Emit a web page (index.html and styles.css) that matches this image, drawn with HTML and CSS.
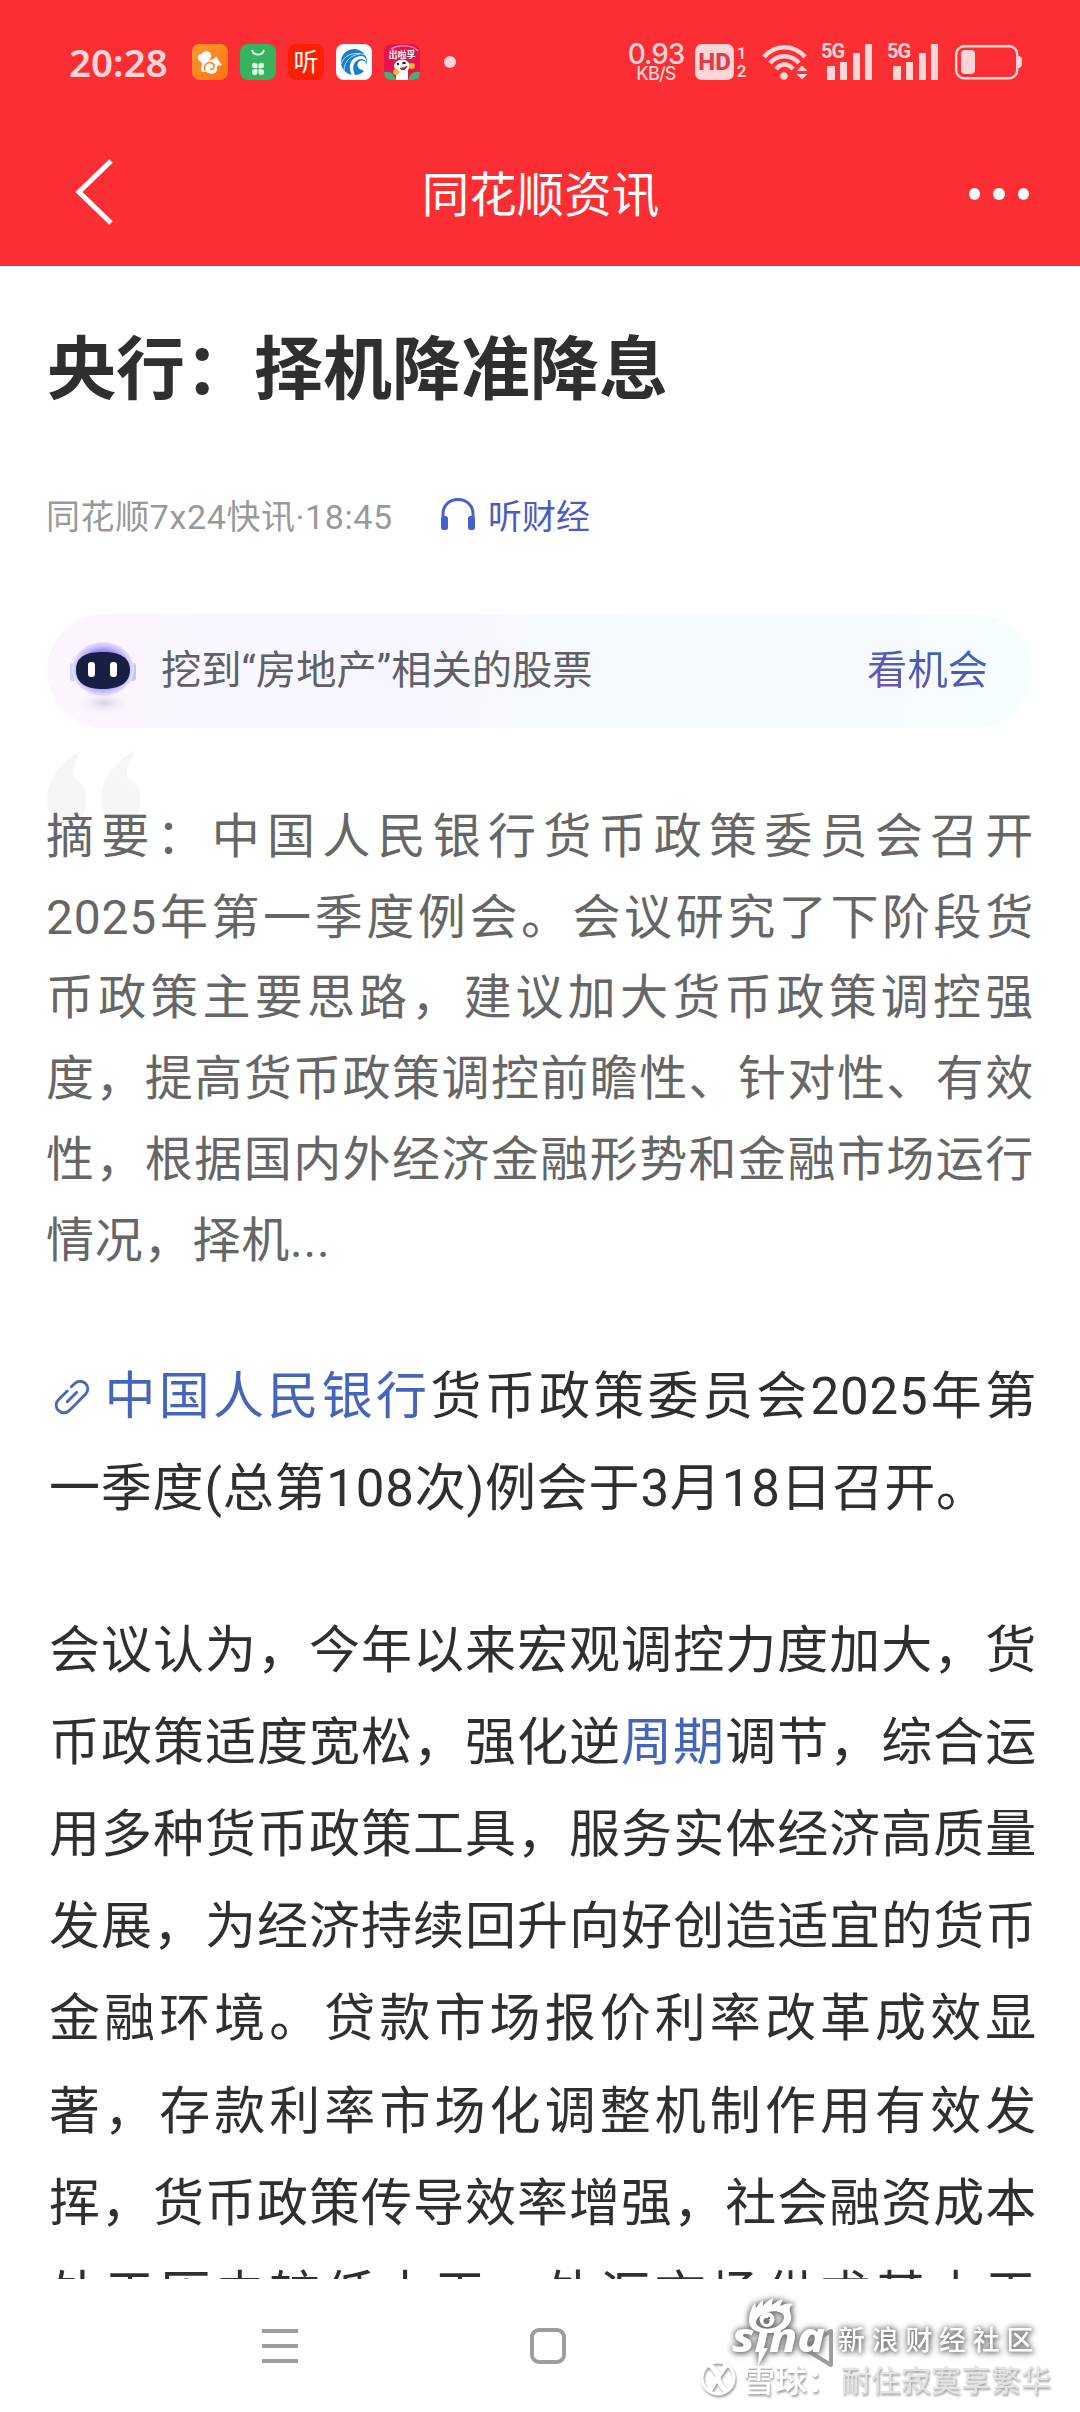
FILE: index.html
```html
<!DOCTYPE html>
<html lang="zh-CN">
<head>
<meta charset="utf-8">
<title>同花顺资讯</title>
<link rel="stylesheet" href="styles.css">
</head>
<body>
<div class="screen">
  <header class="top">
    <div class="status">
      <span class="clock">20:28</span>
      <div class="apps">
        <svg width="36" height="36" viewBox="0 0 36 36"><defs><linearGradient id="orange" x2="1" y2="1"><stop stop-color="#fb982f"/><stop offset="1" stop-color="#ff7512"/></linearGradient></defs><rect width="36" height="36" rx="8" fill="url(#orange)"/><path d="M10 28C7 24 12 22 9 18C4 15 5 10 10 10C11 6 19 6 19 12C19 16 14 18 14 22L14 28Z" fill="#fff"/><path d="M17 17C20 14 22 17 24 12L27 17L30 21L25 22C26 29 22 31 16 29C11 26 13 19 17 17Z" fill="#fff"/><path d="M13 27C11 21 16 17 20 19C24 21 22 26 18 25" fill="none" stroke="#ff8420" stroke-width="1.500"/></svg>
        <svg width="36" height="36" viewBox="0 0 36 36"><rect width="36" height="36" rx="8" fill="#35b35f"/><path d="M12 6A6.200 6.200 0 0 0 24 6" fill="none" stroke="#e6ffe9" stroke-width="1.800"/><g fill="#e6ffe9"><path d="M17.500 24.300V21.500A2.800 2.800 0 1 0 14.800 24.300ZM18.500 24.300V21.500A2.800 2.800 0 1 1 21.200 24.300ZM17.500 25.300V28A2.800 2.800 0 1 1 14.800 25.300ZM18.500 25.300V28A2.800 2.800 0 1 0 21.200 25.300Z"/></g></svg>
        <svg width="36" height="36" viewBox="0 0 36 36"><rect width="36" height="36" rx="8" fill="#ff1e00"/><text class="listen-glyph" x="18" y="26.500">听</text></svg>
        <svg width="36" height="36" viewBox="0 0 36 36"><rect width="36" height="36" rx="8" fill="#fff"/><circle cx="18" cy="18" r="13" fill="#167ed5"/><path d="M16 31C11 22 15 12 26 12C30 13 31 17 30 19L34 25L26 35Z" fill="#fff"/><path d="M19 31C15 23 18 15 26 15C30 16 31 19 30 21C25 18 21 24 28 27C25 30 22 31 19 31Z" fill="#167ed5"/><circle cx="26" cy="21" r="4.500" fill="#fff"/><path d="M5 20C8 11 18 7 29 11M8 27C8 18 14 11 24 10" fill="none" stroke="#b9e2ff" stroke-width="1"/></svg>
        <svg width="36" height="36" viewBox="0 0 36 36"><rect width="36" height="36" rx="8" fill="#e6134d"/><path d="M7 5C14 1 28 0 34 7" fill="none" stroke="#ff84b1" stroke-width="1.500"/><text class="game-glyph" x="18" y="14">出啦孚</text><ellipse cx="18" cy="22" rx="8" ry="6.500" fill="#fff"/><path d="M12 25H24V36H12Z" fill="#fff"/><circle cx="14" cy="20" r="1.200" fill="#222"/><ellipse cx="20" cy="19" rx="1.800" ry="1.200" fill="#222"/><path d="M16 24Q20 28 23 22" fill="#e53939" stroke="#222" stroke-width="1"/><circle cx="28" cy="22" r="3" fill="#ffb52e"/><circle cx="12" cy="28" r="3" fill="#ffb52e"/><path d="M0 28Q9 26 12 36H8Q0 36 0 28ZM36 28Q27 26 24 36H28Q36 36 36 28Z" fill="#3eb673"/></svg>
      </div>
      <span class="more-dot"></span>
      <div class="speed"><span class="rate">0.93</span><span class="unit">KB/S</span></div>
      <svg class="hd" width="54" height="38" viewBox="0 0 54 38"><rect x="0" y="1" width="39" height="36" rx="7" fill="#ffd5d6"/><text class="hd-label" x="19.500" y="27">HD</text><text class="sim" x="46.500" y="15.500">1</text><text class="sim" x="46.500" y="34">2</text></svg>
      <svg class="wifi" width="46" height="38" viewBox="0 0 46 38"><g fill="none" stroke="#ffd5d6" stroke-width="4.500"><path d="M2 14C13 1 32 1 43 14"/><path d="M8 20C16 11 29 11 37 20"/><path d="M14 26C19 20 26 20 31 26"/></g><circle cx="22" cy="33" r="3.800" fill="#ffd5d6"/><path d="M34.500 28L40 22.500L45.500 28ZM34.500 31L40 36.500L45.500 31Z" fill="#ffd5d6"/></svg>
      <svg class="signal" width="54" height="40" viewBox="0 0 54 40"><text class="net" x="0" y="16">5G</text><path d="M6 24H14V38H6ZM19 20H26V38H19ZM32 11H39V38H32ZM44 2H51V38H44Z" fill="#ffd5d6"/></svg>
      <svg class="signal signal-second" width="54" height="40" viewBox="0 0 54 40"><text class="net" x="0" y="16">5G</text><path d="M6 24H14V38H6ZM19 20H26V38H19ZM32 11H39V38H32ZM44 2H51V38H44Z" fill="#ffd5d6"/></svg>
      <svg class="battery" width="68" height="36" viewBox="0 0 68 36"><rect x="1.200" y="2.200" width="61" height="32" rx="8" fill="none" stroke="#ffd5d6" stroke-width="2.400"/><rect x="6" y="6" width="14" height="24" rx="4" fill="#ffd5d6"/><path d="M63 12Q67 12 67 16V20Q67 24 63 24Z" fill="#ffd5d6"/></svg>
    </div>
    <div class="titlebar">
      <svg class="back" width="40" height="68" viewBox="0 0 40 68"><path d="M36 3L4 34L36 65" fill="none" stroke="#fff" stroke-width="5"/></svg>
      <span class="bar-title">同花顺资讯</span>
      <span class="dots"><i></i><i></i><i></i></span>
    </div>
  </header>

  <main class="article">
    <h1>央行：择机降准降息</h1>
    <div class="meta">
      <span class="source">同花顺7x24快讯·18:45</span>
      <svg width="36" height="34" viewBox="0 0 36 34"><path d="M3 25V17C3 -2.500 33 -2.500 33 17V25" fill="none" stroke="#4461cc" stroke-width="3"/><rect x="1" y="19" width="7" height="14" rx="2.500" fill="#4461cc"/><rect x="28" y="19" width="7" height="14" rx="2.500" fill="#4461cc"/></svg>
      <span class="listen">听财经</span>
    </div>
    <div class="banner">
      <svg width="72" height="90" viewBox="0 0 72 90">
        <defs>
          <radialGradient id="halo"><stop offset=".6" stop-color="#8f70f2"/><stop offset=".85" stop-color="#c9c0fa"/><stop offset="1" stop-color="#e9e3fb"/></radialGradient>
          <radialGradient id="shade"><stop offset="0" stop-color="#d5d2e4"/><stop offset="1" stop-color="#f8f3fd" stop-opacity="0"/></radialGradient>
        </defs>
        <ellipse cx="37" cy="72" rx="28" ry="13" fill="url(#shade)"/>
        <rect x="3" y="32" width="7" height="18" rx="3" fill="#c7d6ff"/><rect x="62" y="32" width="7" height="18" rx="3" fill="#c7c5f4"/>
        <ellipse cx="36" cy="38" rx="31" ry="27" fill="url(#halo)"/>
        <path d="M9 39C9 25 20 21 36 21S63 26 63 39S52 58 36 58S9 53 9 39Z" fill="#172042"/>
        <rect x="21" y="31" width="7" height="15" rx="3" fill="#fff"/><rect x="43" y="31" width="7" height="15" rx="3" fill="#fff"/>
      </svg>
      <span class="banner-text">挖到“房地产”相关的股票</span>
      <a class="chance">看机会</a>
    </div>
    <section class="summary">
      <svg class="quote" width="96" height="76" viewBox="0 0 96 76"><path id="mark" d="M35 2C27 15 24 24 27 30C36 34 40 43 39 54C39 68 32 76 20 76C6 76 0 66 0 52C0 32 13 13 35 2Z" fill="#f6f6f7"/><use href="#mark" x="54"/></svg>
      <p>
        <span class="line">摘要：中国人民银行货币政策委员会召开</span>
        <span class="line">2025年第一季度例会。会议研究了下阶段货</span>
        <span class="line">币政策主要思路，建议加大货币政策调控强</span>
        <span class="line">度，提高货币政策调控前瞻性、针对性、有效</span>
        <span class="line">性，根据国内外经济金融形势和金融市场运行</span>
        <span class="line last">情况，择机...</span>
      </p>
    </section>
    <section class="content">
      <p>
        <span class="line"><svg class="chain" width="46" height="44" viewBox="0 0 48 44"><g transform="translate(24 22) rotate(-45)" fill="none" stroke="#4867bc" stroke-width="3" stroke-linecap="round"><path d="M1 -8H-12A8 8 0 0 0 -12 8H-3"/><path d="M-1 8H12A8 8 0 0 0 12 -8H7"/><path d="M-7 0H7"/></g></svg><a>中国人民银行</a>货币政策委员会2025年第</span>
        <span class="line last">一季度(总第108次)例会于3月18日召开。</span>
      </p>
      <p>
        <span class="line">会议认为，今年以来宏观调控力度加大，货</span>
        <span class="line">币政策适度宽松，强化逆<a>周期</a>调节，综合运</span>
        <span class="line">用多种货币政策工具，服务实体经济高质量</span>
        <span class="line">发展，为经济持续回升向好创造适宜的货币</span>
        <span class="line">金融环境。贷款市场报价利率改革成效显</span>
        <span class="line">著，存款利率市场化调整机制作用有效发</span>
        <span class="line">挥，货币政策传导效率增强，社会融资成本</span>
        <span class="line">处于历史较低水平。外汇市场供求基本平</span>
      </p>
    </section>
  </main>

  <nav class="navbar">
    <svg width="36" height="36" viewBox="0 0 36 36"><path d="M0 3H36M0 18H36M0 33H36" stroke="#9d9d9d" stroke-width="4"/></svg>
    <svg width="36" height="36" viewBox="0 0 36 36"><rect x="2" y="2" width="32" height="32" rx="7" fill="none" stroke="#9d9d9d" stroke-width="4"/></svg>
    <svg width="36" height="40" viewBox="0 0 36 40"><path d="M33 3V37L5 20Z" fill="none" stroke="#9d9d9d" stroke-width="4" stroke-linejoin="round"/></svg>
  </nav>

  <div class="watermark">
    <div class="sina">
      <svg width="106" height="76" viewBox="0 0 106 76">
        <path fill="#fff" fill-rule="evenodd" d="M17 23C17 15 20 9 23 4L24 10C26 7 28 4 31 2L31 8C34 4 37 2 41 0L40 7C44 4 47 2 51 1L48 8C52 6 56 5 61 6C57 9 57 11 59 17C61 27 50 35 36 35C24 35 17 31 17 23ZM24 24C25 34 49 33 52 20C53 9 26 12 24 24Z"/>
        <circle cx="35" cy="21.500" r="7.500" fill="#fff"/><circle cx="34.500" cy="23" r="3" fill="#777"/><circle cx="37" cy="20" r="1.300" fill="#777"/>
        <text class="sina-text" x="0" y="54" textLength="93" lengthAdjust="spacingAndGlyphs">sına</text>
        <path d="M27 50L36 50L26 68Z" fill="#fff"/>
      </svg>
      <span class="community">新浪财经社区</span>
    </div>
    <div class="xueqiu">
      <svg width="38" height="38" viewBox="0 0 38 38"><circle cx="19" cy="19" r="16" fill="none" stroke="#fff" stroke-width="3"/><path d="M10 5Q18 12 19 18Q20 26 28 33M28 5L18 19L10 33" fill="none" stroke="#fff" stroke-width="5"/></svg>
      <span class="brand">雪球：</span><span class="user">耐住寂寞享繁华</span>
    </div>
  </div>
</div>
</body>
</html>
```

FILE: styles.css
```css
* { box-sizing: border-box; }
body {
  margin: 0;
  background: #fff;
  font-family: Roboto, "Noto Sans CJK SC", sans-serif;
  text-spacing-trim: space-all;
}
svg { display: block; flex: none; }
.screen {
  position: relative;
  width: 1080px;
  height: 2412px;
  overflow: hidden;
  display: flex;
  flex-direction: column;
  background: #fff;
}

/* Red header */
.top { height: 266px; flex: none; background: #fa2e33; color: #fff; }
.status {
  height: 124px;
  padding-left: 69px;
  display: flex;
  align-items: center;
  color: #ffd5d6;
}
.clock { width: 123px; font: 600 38.500px/40px "Noto Sans", sans-serif; letter-spacing: 0; }
.apps { display: flex; gap: 12px; }
.listen-glyph { font: 400 25px "Noto Sans CJK SC", sans-serif; fill: #fff; text-anchor: middle; }
.game-glyph { font: 700 9px "Noto Sans CJK SC", sans-serif; fill: #fff; text-anchor: middle; }
.more-dot { width: 12px; height: 12px; margin-left: 24px; border-radius: 50%; background: #ffd5d6; }
.speed { width: 56px; margin-left: 172px; display: flex; flex-direction: column; align-items: center; font-family: Inter, sans-serif; font-weight: 500; }
.rate { font-size: 28px; line-height: 23px; letter-spacing: -1px; }
.unit { font-size: 18px; line-height: 16px; letter-spacing: -.8px; }
.hd { margin-left: 11px; }
.hd-label { font: 800 24px Roboto, sans-serif; fill: #dd3f48; text-anchor: middle; }
.sim { font: 600 17px Roboto, sans-serif; fill: #ffd5d6; text-anchor: middle; }
.wifi { margin-left: 13px; }
.signal { margin-left: 13px; }
.signal-second { margin-left: 12px; }
.net { font: 700 20px Roboto, sans-serif; fill: #ffd5d6; letter-spacing: -1px; }
.battery { margin-left: 14px; }
.titlebar {
  height: 142px;
  padding: 0 51px 7px 75px;
  display: grid;
  grid-template-columns: 60px 1fr 60px;
  align-items: center;
}
.bar-title { padding: 9px 0 0 2px; margin-left: -25px; text-align: center; font-size: 47.500px; line-height: 60px; }
.dots { display: flex; justify-content: flex-end; gap: 13px; padding-top: 4px; }
.dots i { width: 12px; height: 12px; border-radius: 50%; background: #fff; }

/* Article */
.article { height: 2013px; flex: none; overflow: hidden; padding: 0 44px 0 46px; }
h1 { margin: 55px 0 0 1px; font-size: 69px; line-height: 100px; font-weight: 700; color: #2f2f2f; }
.meta { margin-top: 68px; height: 50px; display: flex; align-items: center; font-size: 34px; color: #999; }
.source { width: 394px; white-space: nowrap; letter-spacing: .6px; }
.listen { margin-left: 12px; color: #4c5bc4; }
.banner {
  height: 114px;
  margin: 75px 4px 0 1px;
  padding: 0 44px 0 20px;
  display: flex;
  align-items: center;
  border-radius: 57px;
  background: linear-gradient(100deg, #fdf5fd 0%, #f8f6fe 18%, #f6f7fe 35%, #f6fafe 55%, #f7fafd 85%, #f5ffff 100%);
}
.banner svg { margin-top: 10px; }
.banner-text { margin: -9px 0 0 22px; font-size: 40.300px; color: #606066; }
.chance {
  margin: -9px 0 0 auto;
  font-size: 40.300px;
  background: linear-gradient(20deg, #7557b8, #4c5bb5 55%, #356bd0);
  background-clip: text;
  color: transparent;
}
.line { display: block; white-space: nowrap; text-align-last: justify; }
.line.last { text-align-last: left; }
.summary { position: relative; margin: 69px 2px 0 0; color: #666; font-size: 48px; line-height: 80.700px; letter-spacing: .8px; }
.quote { position: absolute; left: 1px; top: -49px; }
.summary p { position: relative; margin: 0; }
.content { margin: 70px -1px 0 3px; color: #2f2f2f; font-size: 51px; line-height: 92.200px; letter-spacing: .8px; }
.content p { margin: 0 0 69px; }
.content a { color: #4565bd; }
.chain { display: inline-block; vertical-align: -5px; margin: 0 7px 0 0; }

/* System navigation */
.navbar { height: 133px; padding: 49px 0 0 262px; display: flex; gap: 232px; align-items: flex-start; }

/* Watermarks over the navigation bar */
.watermark { position: absolute; left: 699px; top: 2298px; color: #fff; }
.sina { display: flex; padding-left: 33px; filter: drop-shadow(0 0 3px #666) drop-shadow(1px 1px 2px #999); }
.sina-text { font: italic 800 41px "Noto Sans", sans-serif; fill: #fff; }
.community { margin-top: 21px; font-size: 27px; line-height: 44px; font-weight: 500; letter-spacing: 6.700px; white-space: nowrap; }
.xueqiu { display: flex; align-items: center; margin-top: -16px; height: 40px; white-space: nowrap; filter: drop-shadow(1px 2px 1px #999); }
.brand { margin-left: 6px; width: 98px; font-size: 32px; font-weight: 500; }
.user { font-size: 30px; color: #e4e4e4; }
```
